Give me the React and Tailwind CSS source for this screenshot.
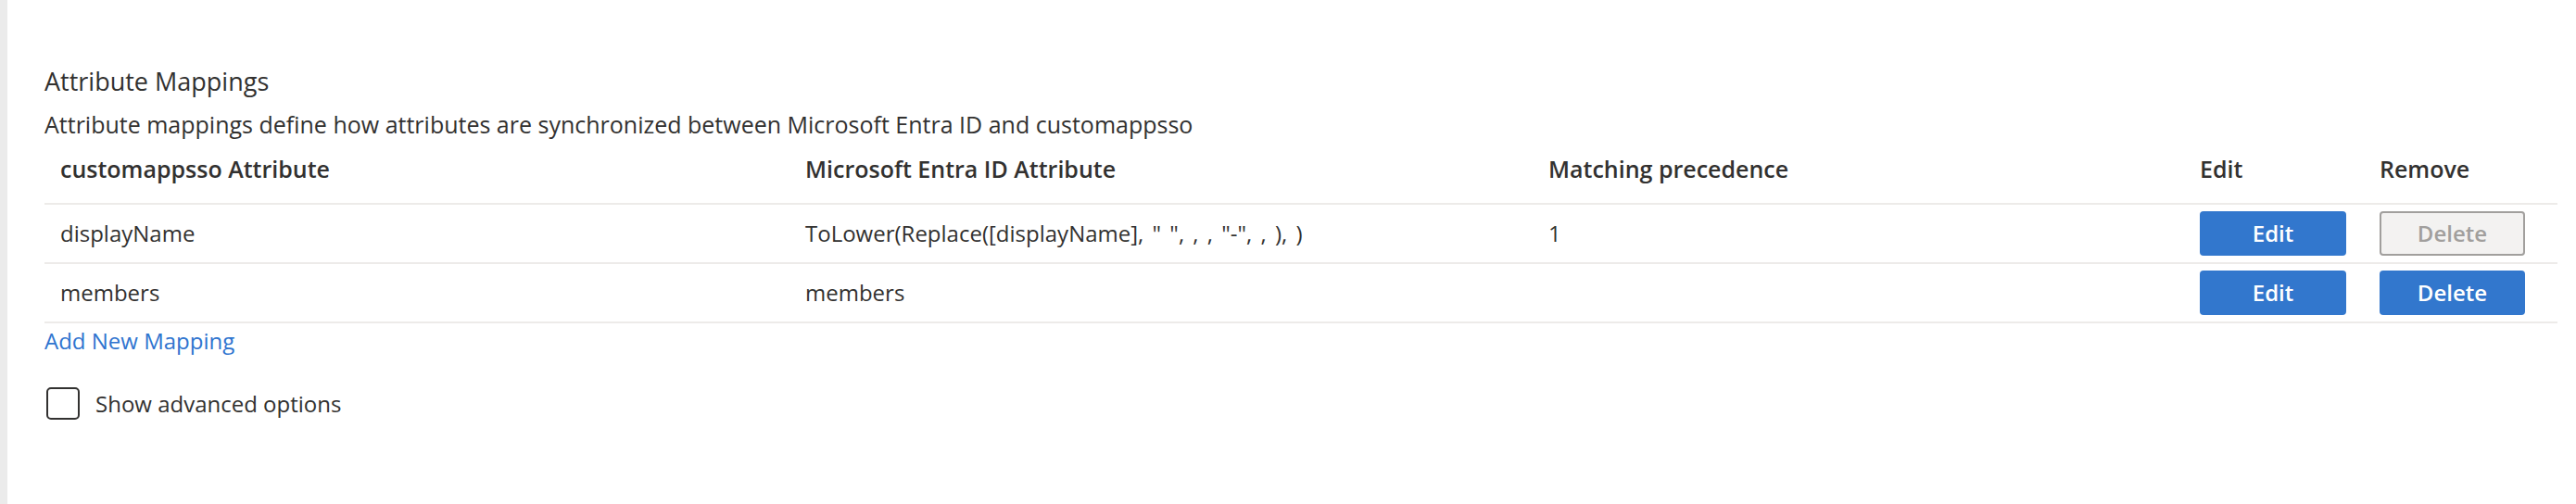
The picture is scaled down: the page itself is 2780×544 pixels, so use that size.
export default function App() {
  const font = { fontFamily: '"Open Sans", "Noto Sans", sans-serif' };
  return (
    <div className="flex w-[2780px] h-[544px] bg-white text-[#323130]" style={font}>
      <div className="w-[8px] h-full bg-[#ebebeb]" />
      <div className="flex-1 pl-[40px] pr-[20px] pt-[70px]">
        <div className="text-[27px] leading-[36px]">Attribute Mappings</div>
        <div className="mt-[12px] text-[25px] leading-[32px]">
          Attribute mappings define how attributes are synchronized between Microsoft Entra ID and customappsso
        </div>
        <div className="grid grid-cols-[804px_802px_704px_194px_208px] h-[71px] border-b-2 border-[#edebe9] pb-[6px] items-center text-[25px] leading-[36px] font-semibold">
          <div className="pl-[17px]">customappsso Attribute</div>
          <div className="pl-[17px]">Microsoft Entra ID Attribute</div>
          <div className="pl-[17px]">Matching precedence</div>
          <div className="pl-[16px]">Edit</div>
          <div className="pl-[16px]">Remove</div>
        </div>
        {[
          { a: 'displayName', b: 'ToLower(Replace([displayName], " ", , , "-", , ), )', c: '1', del: false },
          { a: 'members', b: 'members', c: '', del: true },
        ].map((r) => (
          <div
            key={r.a}
            className="grid grid-cols-[804px_802px_704px_194px_208px] h-[64px] border-b-2 border-[#edebe9] items-center text-[24px] leading-[32px]"
          >
            <div className="pl-[17px]">{r.a}</div>
            <div className="pl-[17px] [word-spacing:3px]">{r.b}</div>
            <div className="pl-[17px]">{r.c}</div>
            <div className="pl-[16px]">
              <button className="w-[158px] h-[48px] rounded-[4px] bg-[#3277cd] text-white font-semibold text-[24px] leading-[32px]">
                Edit
              </button>
            </div>
            <div className="pl-[16px]">
              {r.del ? (
                <button className="w-[157px] h-[48px] rounded-[4px] bg-[#3277cd] text-white font-semibold text-[24px] leading-[32px]">
                  Delete
                </button>
              ) : (
                <button className="w-[157px] h-[48px] rounded-[4px] bg-[#f3f2f1] border-2 border-[#a19f9d] text-[#a19f9d] font-semibold text-[24px] leading-[32px]">
                  Delete
                </button>
              )}
            </div>
          </div>
        ))}
        <div className="mt-[3px] text-[24px] leading-[32px] text-[#2f74cf]">Add New Mapping</div>
        <div className="mt-[34px] flex items-center">
          <div className="ml-[2px] w-[36px] h-[35px] rounded-[5px] border-2 border-[#323130]" />
          <div className="ml-[17px] text-[24px] leading-[32px]">Show advanced options</div>
        </div>
      </div>
    </div>
  );
}
